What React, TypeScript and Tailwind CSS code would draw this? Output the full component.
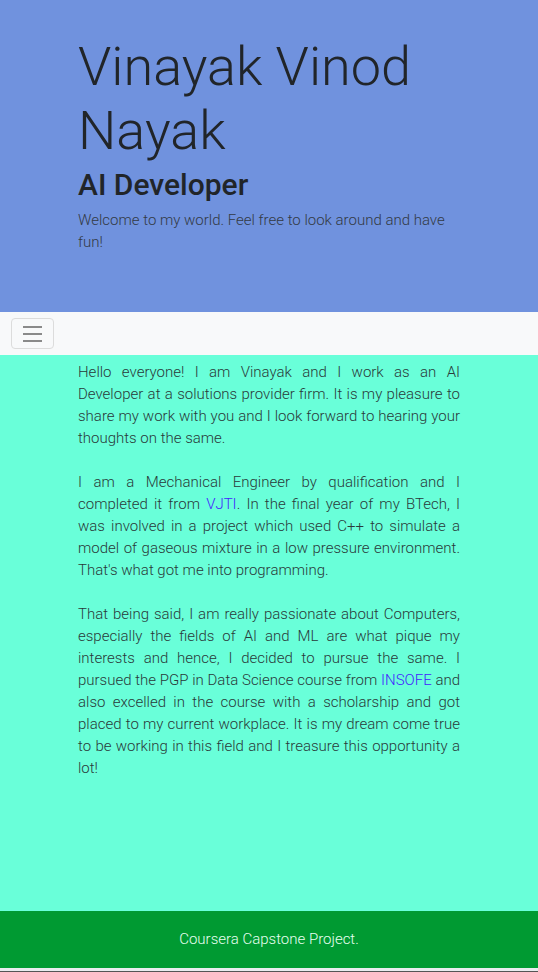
import React from 'react';

export default function App() {
    return (
        <div className="min-h-screen flex flex-col font-['Roboto',sans-serif] font-light text-[#212529]">
            {/* Jumbotron */}
            <header className="h-[312px] bg-[#7092de] px-[78px] pt-[35px]">
                <h1 className="text-[54px] leading-[64px] font-light mb-[3px]">Vinayak Vinod Nayak</h1>
                <h3 className="text-[30px] leading-[38px] font-medium mb-[5px]">AI Developer</h3>
                <p className="text-[15px] leading-[22px] text-[#333a45]">
                    Welcome to my world. Feel free to look around and have fun!
                </p>
            </header>

            {/* Navbar */}
            <nav className="h-[43px] bg-[#f8f9fa] px-[11px] flex items-center">
                <button className="w-[43px] h-[31px] border border-[#dcdcdc] rounded-[4px] flex flex-col items-center justify-center gap-[5px]">
                    <span className="block w-[19px] h-[2px] bg-[#8a8a8a]" />
                    <span className="block w-[19px] h-[2px] bg-[#8a8a8a]" />
                    <span className="block w-[19px] h-[2px] bg-[#8a8a8a]" />
                </button>
            </nav>

            {/* About */}
            <main className="flex-1 h-[556px] bg-[#69ffd9] px-[78px] pt-[6px]">
                <div className="text-[15px] leading-[22px] text-justify text-[#2a3a3a] flex flex-col gap-[22px]">
                    <p>
                        Hello everyone! I am Vinayak and I work as an AI Developer at a solutions provider firm. It is my pleasure to share my work with you and I look forward to hearing your thoughts on the same.
                    </p>
                    <p>
                        I am a Mechanical Engineer by qualification and I completed it from <a href="#" className="text-[#4422ff]">VJTI</a>. In the final year of my BTech, I was involved in a project which used C++ to simulate a model of gaseous mixture in a low pressure environment. That's what got me into programming.
                    </p>
                    <p>
                        That being said, I am really passionate about Computers, especially the fields of AI and ML are what pique my interests and hence, I decided to pursue the same. I pursued the PGP in Data Science course from <a href="#" className="text-[#4422ff]">INSOFE</a> and also excelled in the course with a scholarship and got placed to my current workplace. It is my dream come true to be working in this field and I treasure this opportunity a lot!
                    </p>
                </div>
            </main>

            {/* Footer */}
            <footer className="h-[57px] bg-[#009a32] flex items-center justify-center text-[15px] text-[#e6fff0]">
                Coursera Capstone Project.
            </footer>
            <div className="h-[4px] bg-[#e9ecef] border-b border-[#555]" />
        </div>
    );
}
